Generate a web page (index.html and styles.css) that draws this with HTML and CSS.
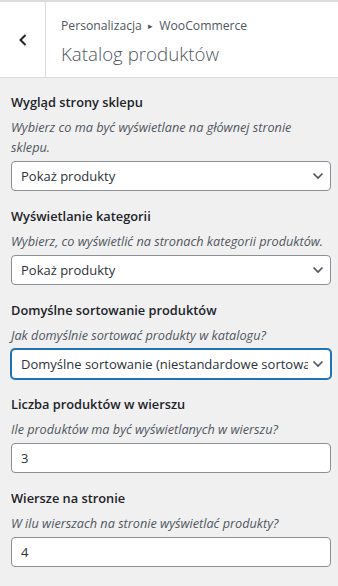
FILE: index.html
```html
<!DOCTYPE html>
<html lang="pl">
<head>
<meta charset="utf-8">
<link rel="stylesheet" href="styles.css">
</head>
<body>
<div class="panel">
  <header class="head">
    <button class="back" aria-label="Wstecz">
      <svg width="12" height="14" viewBox="0 0 12 14"><path d="M8.5 2 L3.5 7 L8.5 12" fill="none" stroke="#1d2327" stroke-width="2"/></svg>
    </button>
    <div class="titles">
      <div class="crumb">Personalizacja <span class="tri">▸</span> WooCommerce</div>
      <h1 class="title">Katalog produktów</h1>
    </div>
  </header>
  <main class="controls">
    <div class="control">
      <div class="label">Wygląd strony sklepu</div>
      <div class="desc">Wybierz co ma być wyświetlane na głównej stronie sklepu.</div>
      <div class="select"><span class="val">Pokaż produkty</span><svg class="chev" width="12" height="8" viewBox="0 0 12 8"><path d="M1.5 1.5 L6 6 L10.5 1.5" fill="none" stroke="#50575e" stroke-width="1.7"/></svg></div>
    </div>
    <div class="control">
      <div class="label">Wyświetlanie kategorii</div>
      <div class="desc">Wybierz, co wyświetlić na stronach kategorii produktów.</div>
      <div class="select"><span class="val">Pokaż produkty</span><svg class="chev" width="12" height="8" viewBox="0 0 12 8"><path d="M1.5 1.5 L6 6 L10.5 1.5" fill="none" stroke="#50575e" stroke-width="1.7"/></svg></div>
    </div>
    <div class="control">
      <div class="label">Domyślne sortowanie produktów</div>
      <div class="desc">Jak domyślnie sortować produkty w katalogu?</div>
      <div class="select focus"><span class="val">Domyślne sortowanie (niestandardowe sortowanie + nazwa)</span><svg class="chev" width="12" height="8" viewBox="0 0 12 8"><path d="M1.5 1.5 L6 6 L10.5 1.5" fill="none" stroke="#50575e" stroke-width="1.7"/></svg></div>
    </div>
    <div class="control">
      <div class="label">Liczba produktów w wierszu</div>
      <div class="desc">Ile produktów ma być wyświetlanych w wierszu?</div>
      <div class="input">3</div>
    </div>
    <div class="control">
      <div class="label">Wiersze na stronie</div>
      <div class="desc">W ilu wierszach na stronie wyświetlać produkty?</div>
      <div class="input">4</div>
    </div>
  </main>
</div>
</body>
</html>
```
FILE: styles.css
```css
* { box-sizing: border-box; }
html, body { margin: 0; padding: 0; }
body {
  background: #f0f0f1;
  font-family: "Open Sans", "Noto Sans", sans-serif;
  color: #1d2327;
  width: 338px;
  height: 586px;
  overflow: hidden;
}
.panel { display: flex; flex-direction: column; }
.head {
  display: flex;
  background: #fff;
  border-top: 2px solid #dcdcde;
  border-bottom: 1px solid #dcdcde;
  height: 78px;
}
.back {
  width: 46px;
  border: 0;
  border-right: 1px solid #dcdcde;
  background: #fff;
  padding: 0;
  display: flex;
  align-items: center;
  justify-content: center;
}
.titles { padding: 14px 0 0 15px; }
.crumb {
  font-size: 12.2px;
  line-height: 20px;
  color: #50575e;
}
.tri { font-size: 9px; position: relative; top: -1px; margin: 0 3px; }
.title {
  margin: 2px 0 0;
  font-size: 18.7px;
  font-weight: 300;
  line-height: 30px;
  color: #50575e;
}
.controls { padding: 14px 7px 0 11px; display: flex; flex-direction: column; gap: 15px; }
.label {
  font-size: 12.8px;
  font-weight: 600;
  color: #1d2327;
  line-height: 20px;
}
.desc {
  font-size: 12.7px;
  font-style: italic;
  color: #50575e;
  line-height: 20px;
  margin: 5px 0 4px;
}
.select, .input {
  height: 30px;
  background: #fff;
  border: 1px solid #8c8f94;
  border-radius: 4px;
  display: flex;
  align-items: center;
  padding: 0 9px;
  font-size: 13px;
  color: #2c3338;
}
.select { padding-right: 6px; }
.val { flex: 1; white-space: nowrap; overflow: hidden; }
.chev { flex: none; margin-left: 4px; }
.select.focus { border-color: #2271b1; box-shadow: 0 0 0 1px #2271b1; }
```
